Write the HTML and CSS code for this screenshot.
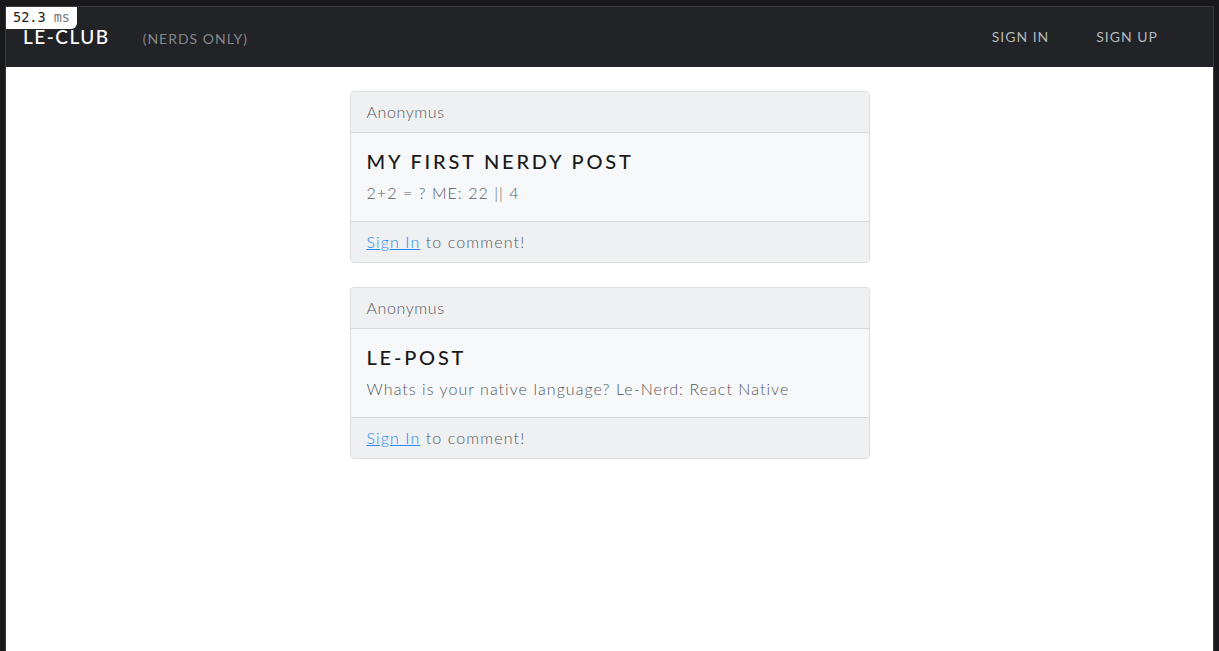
FILE: index.html
```html
<!DOCTYPE html>
<html lang="en">
<head>
<meta charset="utf-8">
<title>Le-Club</title>
<link rel="stylesheet" href="styles.css">
</head>
<body>
<div class="frame">
  <div class="timer"><span class="num">52.3</span> <span class="unit">ms</span></div>
  <nav class="navbar">
    <div class="brand-group">
      <a class="brand" href="#">Le-Club</a>
      <span class="tagline">(Nerds only)</span>
    </div>
    <div class="nav-links">
      <a class="nav-link" href="#">Sign In</a>
      <a class="nav-link" href="#">Sign Up</a>
    </div>
  </nav>
  <main class="posts">
    <article class="card">
      <div class="card-header">Anonymus</div>
      <div class="card-body">
        <h5 class="card-title">My first nerdy post</h5>
        <p class="card-text">2+2 = ? ME: 22 || 4</p>
      </div>
      <div class="card-footer"><a href="#" class="link">Sign In</a> to comment!</div>
    </article>
    <article class="card">
      <div class="card-header">Anonymus</div>
      <div class="card-body">
        <h5 class="card-title">Le-Post</h5>
        <p class="card-text">Whats is your native language? Le-Nerd: React Native</p>
      </div>
      <div class="card-footer"><a href="#" class="link">Sign In</a> to comment!</div>
    </article>
  </main>
</div>
</body>
</html>
```
FILE: styles.css
```css
* { box-sizing: border-box; }
html, body { height: 100%; }
body {
  margin: 0;
  background: #19191b;
  padding: 6px 5px 0 5px;
  font-family: "Lato", "Liberation Sans", sans-serif;
  font-weight: 300;
  color: #55595c;
}
.frame {
  position: relative;
  height: 100%;
  background: #fff;
  border: 1px solid #3a3b3e;
  border-bottom: none;
}
.timer {
  position: absolute;
  top: 0;
  left: 0;
  z-index: 2;
  background: #fff;
  padding: 3px 7px 4px 7px;
  font-family: "DejaVu Sans Mono", "Liberation Mono", monospace;
  font-size: 13.5px;
  line-height: 15px;
  border-bottom-right-radius: 6px;
  color: #222;
}
.timer .unit { color: #777; }
.navbar {
  height: 60px;
  background: #212327;
  display: flex;
  align-items: center;
  justify-content: space-between;
  padding: 0 16px 2px 17px;
}
.brand-group { display: flex; align-items: baseline; gap: 33px; }
.brand {
  color: #fff;
  text-decoration: none;
  text-transform: uppercase;
  font-size: 19px;
  font-weight: 500;
  letter-spacing: 1.5px;
}
.tagline {
  color: #84878c;
  text-transform: uppercase;
  font-size: 14px;
  font-weight: 400;
  letter-spacing: 1px;
}
.nav-links { display: flex; gap: 47px; padding-right: 39px; }
.nav-link {
  color: #b5b8bc;
  text-decoration: none;
  text-transform: uppercase;
  font-size: 14px;
  font-weight: 400;
  letter-spacing: 1px;
}
.posts {
  width: 520px;
  margin: 24px auto 0 auto;
  display: flex;
  flex-direction: column;
  gap: 24px;
}
.card {
  border: 1px solid #dcdde0;
  border-radius: 4px;
  background: #f7f8fa;
  overflow: hidden;
}
.card-header, .card-footer {
  background: #eff0f2;
  padding: 8px 16px;
  font-size: 16px;
  line-height: 24px;
}
.card-header { border-bottom: 1px solid #d6d7da; letter-spacing: 0.6px; }
.card-footer { border-top: 1px solid #d6d7da; letter-spacing: 1.1px; }
.card-body { padding: 16px; }
.card-title {
  margin: 0 0 8px 0;
  font-size: 20px;
  line-height: 24px;
  font-weight: 500;
  letter-spacing: 2.8px;
  text-transform: uppercase;
  color: #1a1a1a;
}
.card-text {
  margin: 0;
  font-size: 16px;
  line-height: 24px;
  letter-spacing: 1.05px;
}
.link { color: #2a88f2; text-decoration: underline; }
```
